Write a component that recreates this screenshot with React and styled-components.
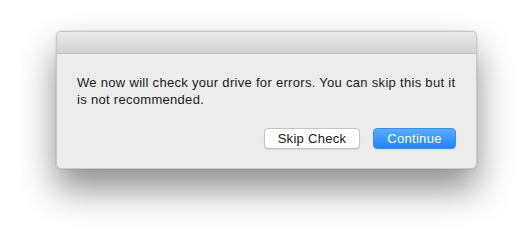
import React from 'react';
import styled, { createGlobalStyle } from 'styled-components';

const GlobalStyle = createGlobalStyle`
  html, body {
    margin: 0;
    padding: 0;
    background: #ffffff;
  }
  body {
    font-family: "Liberation Sans", Arial, sans-serif;
  }
`;

const Stage = styled.div`
  width: 532px;
  height: 249px;
  padding: 31px 0 0 56px;
  box-sizing: border-box;
`;

const Window = styled.div`
  width: 421px;
  height: 138px;
  display: flex;
  flex-direction: column;
  background: #ececec;
  border-radius: 5px;
  border: 1px solid #c8c8c8;
  box-sizing: border-box;
  overflow: hidden;
  box-shadow: 0 20px 36px rgba(0, 0, 0, 0.45), 0 0 2px rgba(0, 0, 0, 0.2);
`;

const TitleBar = styled.div`
  height: 21px;
  flex: none;
  background: linear-gradient(#e9e9e9, #d3d3d3);
  border-bottom: 1px solid #c2c2c2;
`;

const Body = styled.div`
  flex: 1;
  display: flex;
  flex-direction: column;
  padding: 20px 20px 19px 20px;
`;

const Message = styled.p`
  margin: 0;
  font-size: 13px;
  line-height: 17px;
  letter-spacing: 0.3px;
  color: #1a1a1a;
`;

const Actions = styled.div`
  margin-top: auto;
  display: flex;
  justify-content: flex-end;
  gap: 13px;
`;

const Button = styled.button`
  height: 21px;
  min-width: ${p => p.$width}px;
  padding: 0 12px;
  border-radius: 4px;
  font-family: "Liberation Sans", Arial, sans-serif;
  font-size: 13px;
  letter-spacing: 0.3px;
  box-sizing: border-box;
  cursor: default;
  border: 1px solid ${p => (p.$primary ? '#3a8ef0' : '#c4c4c4')};
  color: ${p => (p.$primary ? '#ffffff' : '#1a1a1a')};
  background: ${p =>
    p.$primary ? 'linear-gradient(#5aaefc, #1d84fa)' : '#ffffff'};
  box-shadow: 0 1px 1px rgba(0, 0, 0, 0.08);
`;

export default function App() {
  return (
    <>
      <GlobalStyle />
      <Stage>
        <Window>
          <TitleBar />
          <Body>
            <Message>
              We now will check your drive for errors. You can skip this but it
              is not recommended.
            </Message>
            <Actions>
              <Button $width={96}>Skip Check</Button>
              <Button $primary $width={83}>Continue</Button>
            </Actions>
          </Body>
        </Window>
      </Stage>
    </>
  );
}
